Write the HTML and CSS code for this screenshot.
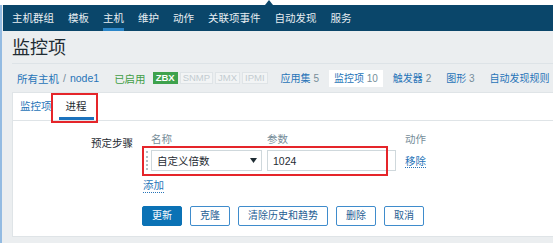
FILE: index.html
```html
<!DOCTYPE html>
<html lang="zh-CN">
<head>
    <meta charset="UTF-8">
    <meta name="viewport" content="width=device-width, initial-scale=1.0">
    <title>监控项</title>
    <link rel="stylesheet" href="styles.css">
</head>
<body>
    <div class="topstrip"><span class="notch"></span></div>
    <div class="page">
        <nav class="topnav">
            <a href="#">主机群组</a>
            <a href="#">模板</a>
            <a href="#" class="active">主机</a>
            <a href="#">维护</a>
            <a href="#">动作</a>
            <a href="#">关联项事件</a>
            <a href="#">自动发现</a>
            <a href="#">服务</a>
        </nav>

        <header class="header">
            <h1 class="title">监控项</h1>
        </header>

        <div class="crumbs">
            <a href="#">所有主机</a>
            <span class="sep">/</span>
            <a href="#">node1</a>
            <span class="status">已启用</span>
            <span class="badges">
                <span class="badge on">ZBX</span>
                <span class="badge">SNMP</span>
                <span class="badge">JMX</span>
                <span class="badge">IPMI</span>
            </span>
            <span class="crumb-tabs">
                <a href="#">应用集 <span class="count">5</span></a>
                <a href="#" class="active">监控项 <span class="count">10</span></a>
                <a href="#">触发器 <span class="count">2</span></a>
                <a href="#">图形 <span class="count">3</span></a>
                <a href="#">自动发现规则</a>
            </span>
        </div>

        <div class="box">
            <div class="tabs">
                <a href="#" class="tab">监控项</a>
                <a href="#" class="tab active">进程</a>
            </div>

            <div class="form">
                <div class="form-row">
                    <label class="form-label">预定步骤</label>
                    <div class="form-field">
                        <div class="step-head">
                            <span class="c-handle"></span>
                            <span class="c-name">名称</span>
                            <span class="c-param">参数</span>
                            <span class="c-action">动作</span>
                        </div>
                        <div class="step">
                            <span class="c-handle"><span class="drag"></span></span>
                            <span class="c-name">
                                <span class="select">
                                    <span>自定义倍数</span>
                                    <svg width="7" height="5" viewBox="0 0 7 5"><polygon points="0,0 7,0 3.5,5" fill="#1f2c33"/></svg>
                                </span>
                            </span>
                            <span class="c-param">
                                <input type="text" class="text-input" value="1024">
                            </span>
                            <span class="c-action"><a href="#" class="link">移除</a></span>
                            <span class="mark"></span>
                        </div>
                        <a href="#" class="link add">添加</a>
                    </div>
                </div>

                <div class="form-row">
                    <span></span>
                    <div class="buttons">
                        <button class="btn primary">更新</button>
                        <button class="btn">克隆</button>
                        <button class="btn">清除历史和趋势</button>
                        <button class="btn">删除</button>
                        <button class="btn">取消</button>
                    </div>
                </div>
            </div>
        </div>
    </div>
</body>
</html>
```

FILE: styles.css
```css
body {
    margin: 0;
    background: #ebeef0;
    font-family: "Liberation Sans", "Noto Sans CJK SC", sans-serif;
    font-size: 10.5px;
    color: #1f2c33;
    overflow: hidden;
}

a {
    color: #2774b8;
    text-decoration: none;
}

.topstrip {
    position: relative;
    height: 5px;
    background: #ffffff;
}

.topstrip .notch {
    position: absolute;
    left: 265px;
    bottom: 0;
    border-left: 4px solid transparent;
    border-right: 4px solid transparent;
    border-bottom: 5px solid #0a466a;
}

.page {
    border-left: 2px solid #93bbe2;
    padding-left: 1px;
    height: 238px;
}

/* top menu */
.topnav {
    display: flex;
    gap: 14px;
    height: 26px;
    padding-left: 9px;
    background: #0a466a;
}

.topnav a {
    display: block;
    line-height: 26px;
    color: #e8eef2;
    white-space: nowrap;
}

.topnav a.active {
    box-shadow: inset 0 -3px 0 #2b86c9;
}

.header {
    margin-left: 9px;
    height: 32px;
    border-bottom: 1px solid #dde3e7;
}

.title {
    margin: 0;
    padding-top: 1px;
    font-size: 18px;
    font-weight: normal;
    line-height: 32px;
    color: #1f2c33;
}

/* breadcrumbs */
.crumbs {
    display: flex;
    align-items: center;
    height: 28px;
    padding-left: 14px;
    white-space: nowrap;
}

.crumbs > * {
    flex: none;
}

.crumbs .sep {
    margin: 0 4px;
    color: #768d99;
}

.crumbs .status {
    margin-left: 15px;
    color: #429e47;
}

.badges {
    display: flex;
    gap: 2px;
    margin-left: 7px;
}

.badge {
    padding: 0 2px;
    font-size: 9.5px;
    line-height: 10px;
    border: 1px solid #dfe4e7;
    background: #f2f4f5;
    color: #c3ccd1;
}

.badge.on {
    background: #3ea24d;
    border-color: #3ea24d;
    color: #ffffff;
    font-weight: bold;
}

.crumb-tabs {
    display: flex;
    gap: 5px;
    margin-left: 8px;
    font-size: 10px;
}

.crumb-tabs a {
    padding: 3px 5px;
    line-height: 11px;
}

.crumb-tabs a.active {
    background: #ffffff;
}

.count {
    color: #768d99;
}

/* content box */
.box {
    margin-left: 9px;
    padding-bottom: 10px;
    background: #ffffff;
    border: 1px solid #dfe4e7;
    border-right: none;
}

.tabs {
    display: flex;
    height: 27px;
    border-bottom: 1px solid #dfe4e7;
}

.tab {
    padding: 0 7px;
    line-height: 27px;
}

.tab.active {
    position: relative;
    color: #1f2c33;
    box-shadow: inset 0 -3px 0 #1b72bd;
}

.tab.active::after {
    content: "";
    position: absolute;
    left: -8px;
    top: 0;
    right: -4px;
    bottom: -3px;
    border: 2px solid #e5252a;
}

.form {
    padding-top: 11px;
}

.form-row {
    display: grid;
    grid-template-columns: 120px auto;
    column-gap: 10px;
}

.form-label {
    text-align: right;
    padding-top: 4px;
    line-height: 14px;
}

.step-head,
.step {
    display: flex;
    align-items: center;
}

.step-head {
    line-height: 14px;
    color: #768d99;
    margin-bottom: 4px;
}

.step {
    position: relative;
    height: 21px;
}

.c-handle {
    width: 8px;
    flex: none;
}

.c-name {
    width: 116px;
    flex: none;
}

.c-param {
    width: 138px;
    flex: none;
}

.drag {
    display: block;
    width: 0;
    height: 19px;
    margin-left: 3px;
    border-left: 2px dotted #b4bfc5;
}

.select {
    display: flex;
    align-items: center;
    justify-content: space-between;
    width: 111px;
    height: 21px;
    box-sizing: border-box;
    padding: 0 4px 0 5px;
    border: 1px solid #cfd8dc;
    background: #ffffff;
}

.text-input {
    display: block;
    width: 129px;
    height: 21px;
    box-sizing: border-box;
    margin: 0;
    padding: 0 5px;
    border: 1px solid #cfd8dc;
    font: inherit;
    color: #1f2c33;
}

.link {
    line-height: 14px;
    border-bottom: 1px dotted #2774b8;
}

.mark {
    position: absolute;
    left: -1px;
    top: -4px;
    width: 246px;
    height: 30px;
    box-sizing: border-box;
    border: 2px solid #e5252a;
}

.add {
    display: inline-block;
    margin-top: 7px;
}

.buttons {
    display: flex;
    gap: 8px;
    margin-top: 13px;
    margin-left: -1px;
}

.btn {
    height: 20px;
    padding: 0 9px;
    font-family: inherit;
    font-size: 10px;
    line-height: 18px;
    border: 1px solid #3f8ccc;
    border-radius: 2px;
    background: #ffffff;
    color: #1f5e94;
    cursor: pointer;
}

.btn.primary {
    background: #0b72b5;
    border-color: #0b72b5;
    color: #ffffff;
}
```
